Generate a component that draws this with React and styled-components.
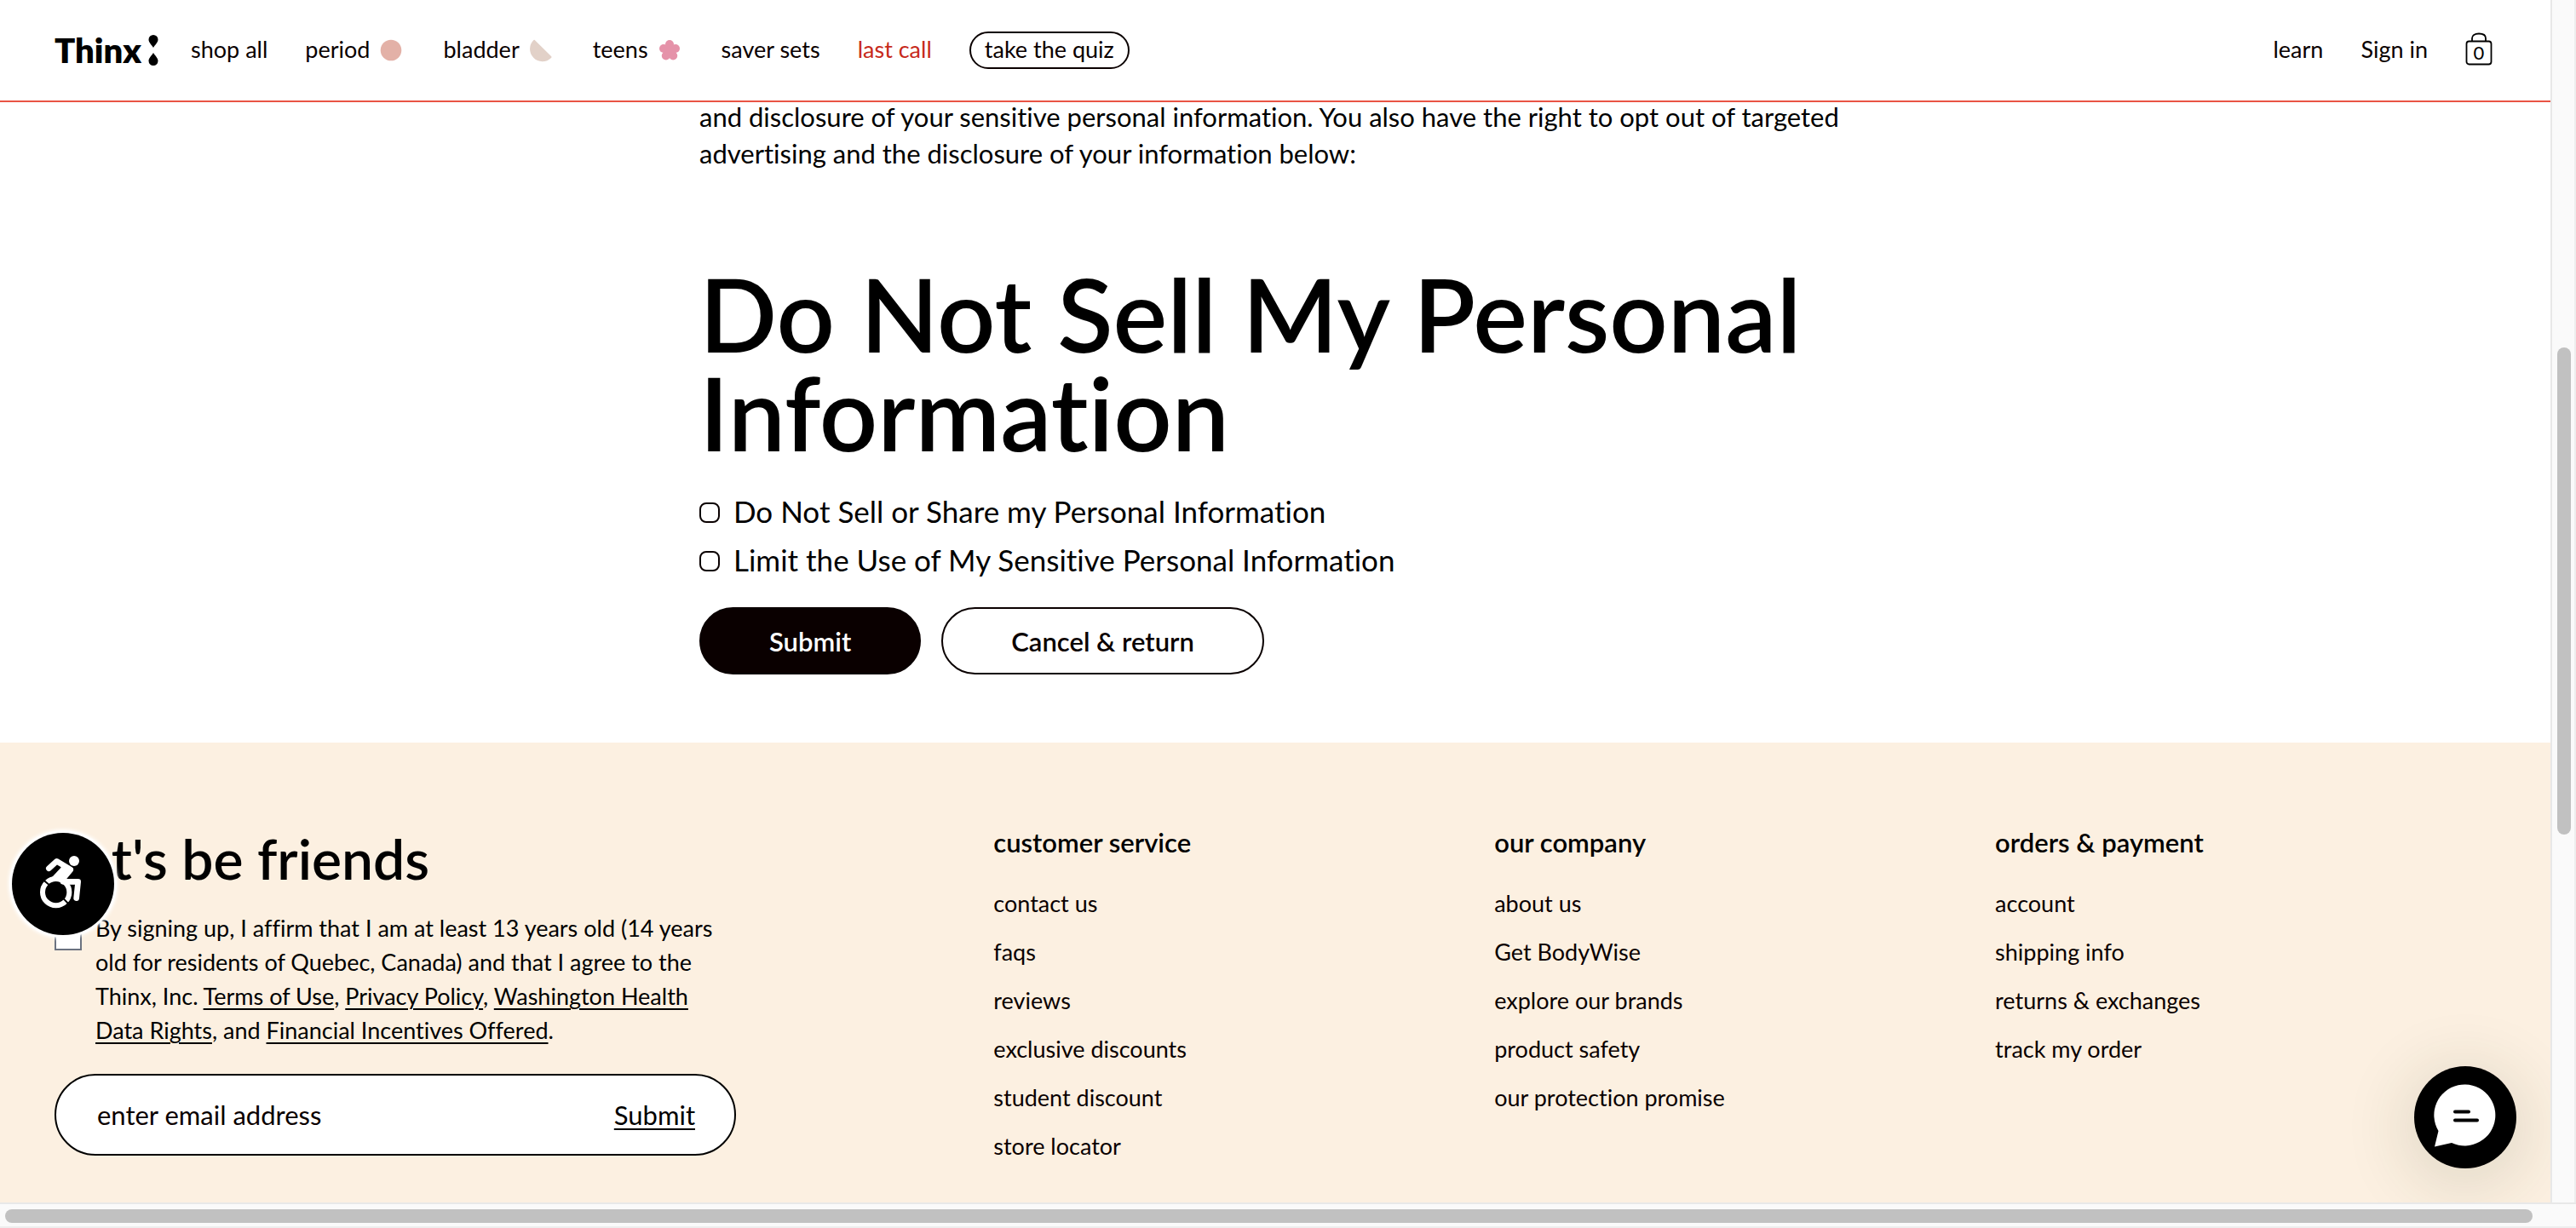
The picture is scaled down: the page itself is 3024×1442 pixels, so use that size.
import React from "react";
import styled, { createGlobalStyle } from "styled-components";

const GlobalStyle = createGlobalStyle`
  *, *::before, *::after { box-sizing: border-box; }
  html, body, #root { height: 100%; }
  body {
    margin: 0;
    background: #fff;
    color: #000;
    font-family: Lato, "Open Sans", sans-serif;
    font-size: 27px;
    font-variant-ligatures: none;
  }
  h1, h2, h3, p, ul { margin: 0; padding: 0; }
  ul { list-style: none; }
  button, input { font: inherit; color: inherit; }
  button { cursor: pointer; }
`;

const Frame = styled.div`
  display: grid;
  grid-template-columns: minmax(0, 1fr) 30px;
  grid-template-rows: minmax(0, 1fr) 30px;
  height: 100vh;
  overflow: hidden;
`;

const Viewport = styled.div`
  position: relative;
  display: flex;
  flex-direction: column;
  overflow: hidden;
`;

const VerticalTrack = styled.div`
  display: grid;
  grid-template-rows: 408fr 572fr 432fr;
  padding: 0 4px 0 6px;
  background: #fafafa;
  border-left: 2px solid #e8e8e8;
  border-right: 2px solid #ededed;
`;

const HorizontalTrack = styled.div`
  grid-column: 1 / -1;
  padding: 6px 51px 4px 6px;
  background: #fafafa;
  border-top: 2px solid #e8e8e8;
  border-bottom: 2px solid #ededed;
`;

const Thumb = styled.div`
  grid-row: 2;
  height: 100%;
  border-radius: 8px;
  background: #c1c1c1;
`;

const Header = styled.header`
  position: absolute;
  inset: 0 0 auto 0;
  z-index: 2;
  display: flex;
  align-items: center;
  justify-content: space-between;
  height: 120px;
  padding: 0 68px 0 64px;
  background: #fff;
  border-bottom: 2px solid #e95444;
`;

const Nav = styled.nav`
  display: flex;
  align-items: center;
  gap: 44px;
`;

const Logo = styled.a`
  display: flex;
  align-items: center;
  gap: 8px;
  margin-right: -6px;
  font-size: 40px;
  line-height: 44px;
  font-weight: 800;
  color: #000;
  text-decoration: none;
`;

const NavLink = styled.a`
  display: flex;
  align-items: center;
  gap: 10px;
  padding-bottom: 2px;
  line-height: 32px;
  color: ${(p) => (p.$accent ? "#c72a1c" : "#0a0000")};
  text-decoration: none;
  white-space: nowrap;
`;

const QuizLink = styled(NavLink)`
  height: 44px;
  padding: 0 16px 2px;
  border: 2px solid #0a0000;
  border-radius: 22px;
`;

const Main = styled.main`
  flex: none;
  width: 100%;
  max-width: 1352px;
  margin: 0 auto;
  padding: 116px 0 80px;
`;

const Intro = styled.p`
  font-size: 31px;
  line-height: 43px;
`;

const Title = styled.h1`
  margin: 108px 0 30px;
  font-size: 120px;
  line-height: 116px;
  font-weight: 600;
`;

const Option = styled.label`
  display: flex;
  align-items: center;
  gap: 16px;
  font-size: 35px;
  line-height: 57px;
`;

const OptionBox = styled.input`
  appearance: none;
  flex: none;
  width: 24px;
  height: 24px;
  margin: 2px 0 0;
  border: 2px solid #0a0000;
  border-radius: 8px;
  background: #fff;
  &:checked { background: #0a0000; }
`;

const Actions = styled.div`
  display: flex;
  gap: 24px;
  margin-top: 27px;
`;

const PillButton = styled.button`
  height: 79px;
  padding: 0 80px;
  border: 2px solid #0a0000;
  border-radius: 40px;
  background: ${(p) => (p.$filled ? "#0a0000" : "#fff")};
  color: ${(p) => (p.$filled ? "#fff" : "#0a0000")};
  font-size: 31px;
  font-weight: 600;
`;

const Footer = styled.footer`
  flex: 1 0 auto;
  display: grid;
  grid-template-columns: 15fr 8fr 8fr 8fr;
  padding: 98px 64px 55px;
  background: #fcf0e1;
`;

const Signup = styled.form`
  width: 100%;
  max-width: 800px;
`;

const SignupTitle = styled.h2`
  font-size: 66px;
  line-height: 76px;
  font-weight: 600;
`;

const Consent = styled.div`
  display: flex;
  align-items: flex-start;
  gap: 16px;
  margin: 24px 0 31px;
  line-height: 40px;
  a { color: inherit; text-decoration-thickness: 2px; text-underline-offset: 4px; }
`;

const ConsentBox = styled.input`
  appearance: none;
  flex: none;
  width: 32px;
  height: 32px;
  margin: 14px 0 0;
  border: 2px solid #6b7280;
  background: #fff;
  &:checked { background: #6b7280; }
`;

const EmailField = styled.div`
  display: flex;
  align-items: center;
  height: 96px;
  padding: 0 46px 0 48px;
  border: 2px solid #000;
  border-radius: 48px;
  background: #fff;
  font-size: 31px;
`;

const EmailInput = styled.input`
  flex: 1;
  min-width: 0;
  padding: 0;
  border: 0;
  outline: 0;
  background: transparent;
  &::placeholder { color: #0a0000; opacity: 1; }
`;

const TextButton = styled.button`
  padding: 0;
  border: 0;
  background: none;
  text-decoration: underline;
  text-decoration-thickness: 2px;
  text-underline-offset: 4px;
`;

const ColumnTitle = styled.h3`
  margin-bottom: 24px;
  font-size: 31px;
  line-height: 38px;
  font-weight: 600;
`;

const ColumnLink = styled.a`
  display: block;
  line-height: 57px;
  color: #0a0000;
  text-decoration: none;
`;

const RoundButton = styled.button`
  position: absolute;
  z-index: 3;
  width: 120px;
  height: 120px;
  padding: 0;
  border: 0;
  border-radius: 50%;
  background: #000;
  svg { display: block; }
`;

const AccessButton = styled(RoundButton)`
  left: 14px;
  bottom: 314px;
  box-shadow: 0 0 0 3px #fff, 0 0 4px 4px #fff;
`;

const ChatButton = styled(RoundButton)`
  right: 40px;
  bottom: 40px;
  box-shadow: 0 12px 80px 8px rgba(40, 60, 20, 0.14);
`;

const Drops = () => (
  <svg width="12" height="36" viewBox="0 0 12 36" aria-hidden="true">
    <path d="M6 15C4 11.500 0.500 9 0.500 5.500A5.500 5.500 0 0 1 11.500 5.500C11.500 9 8 11.500 6 15Z" />
    <path d="M6 21C4 24.500 0.500 27 0.500 30.500A5.500 5.500 0 0 0 11.500 30.500C11.500 27 8 24.500 6 21Z" />
  </svg>
);

const Circle = () => (
  <svg width="32" height="32" viewBox="0 0 32 32" aria-hidden="true">
    <circle cx="15" cy="17" r="12.300" fill="#e3b1a7" />
  </svg>
);

const HalfMoon = () => (
  <svg width="32" height="32" viewBox="0 0 32 32" aria-hidden="true">
    <path d="M6.500 5Q7.500 4.500 8.200 5.500L27 24Q28 25 27 26A14 14 0 0 1 6.500 5Z" fill="#e2d1c8" />
  </svg>
);

const Flower = () => (
  <svg width="32" height="32" viewBox="0 0 32 32" aria-hidden="true">
    <g fill="#e592a9">
      <circle cx="15" cy="10" r="5" />
      <circle cx="8" cy="15" r="5" />
      <circle cx="22" cy="15" r="5" />
      <circle cx="10.800" cy="23.500" r="5" />
      <circle cx="19.200" cy="23.500" r="5" />
      <circle cx="15" cy="17" r="7" />
    </g>
  </svg>
);

const Bag = () => (
  <svg width="32" height="40" viewBox="0 0 32 40" role="img" aria-label="Bag, 0 items">
    <g fill="none" stroke="#000" strokeWidth="1.800">
      <rect x="1.500" y="10.500" width="29" height="27" rx="3" />
      <path d="M8 10.500V7C8 3.500 11 1.500 16 1.500S24 3.500 24 7V10.500" />
    </g>
    <text x="16" y="32" fontSize="22" textAnchor="middle">0</text>
  </svg>
);

const Wheelchair = () => (
  <svg width="120" height="120" viewBox="42 51 360 360" aria-hidden="true">
    <circle cx="261" cy="150" r="18" fill="#fff" />
    <g fill="none" stroke="#fff" strokeLinecap="round" strokeLinejoin="round">
      <path d="M172 176L200 151L248 180" strokeWidth="20" />
      <path d="M222 223H275L269 281" strokeWidth="20" />
    </g>
    <circle cx="197" cy="260" r="47" fill="none" stroke="#fff" strokeWidth="18" />
    <path d="M222 155L256 174Q262 182 254 190L234 214H262V232H240Q216 208 164 221L184 206L214 174Z" fill="#fff" />
    <path d="M155 219L173 234M224 283L243 303" stroke="#000" strokeWidth="6" />
  </svg>
);

const ChatIcon = () => (
  <svg width="120" height="120" viewBox="0 0 120 120" aria-hidden="true">
    <path d="M24 94.500L28.500 76A36 36 0 1 1 44 90Z" fill="#fff" />
    <path d="M48 53.500H64M48 63.500H74" stroke="#000" strokeWidth="4" strokeLinecap="round" />
  </svg>
);

const columns = [
  {
    title: "customer service",
    links: ["contact us", "faqs", "reviews", "exclusive discounts", "student discount", "store locator"],
  },
  {
    title: "our company",
    links: ["about us", "Get BodyWise", "explore our brands", "product safety", "our protection promise"],
  },
  {
    title: "orders & payment",
    links: ["account", "shipping info", "returns & exchanges", "track my order"],
  },
];

export default function App() {
  return (
    <>
      <GlobalStyle />
      <Frame>
        <Viewport>
          <Header>
            <Nav aria-label="Shop">
              <Logo href="#">Thinx<Drops /></Logo>
              <NavLink href="#">shop all</NavLink>
              <NavLink href="#">period<Circle /></NavLink>
              <NavLink href="#">bladder<HalfMoon /></NavLink>
              <NavLink href="#">teens<Flower /></NavLink>
              <NavLink href="#">saver sets</NavLink>
              <NavLink href="#" $accent>last call</NavLink>
              <QuizLink href="#">take the quiz</QuizLink>
            </Nav>
            <Nav aria-label="Account">
              <NavLink href="#">learn</NavLink>
              <NavLink href="#">Sign in</NavLink>
              <NavLink href="#"><Bag /></NavLink>
            </Nav>
          </Header>

          <Main>
            <Intro>
              and disclosure of your sensitive personal information. You also have the right to opt out of
              targeted advertising and the disclosure of your information below:
            </Intro>
            <Title>Do Not Sell My Personal Information</Title>
            <Option>
              <OptionBox type="checkbox" />
              Do Not Sell or Share my Personal Information
            </Option>
            <Option>
              <OptionBox type="checkbox" />
              Limit the Use of My Sensitive Personal Information
            </Option>
            <Actions>
              <PillButton type="button" $filled>Submit</PillButton>
              <PillButton type="button">Cancel &amp; return</PillButton>
            </Actions>
          </Main>

          <Footer>
            <Signup onSubmit={(e) => e.preventDefault()}>
              <SignupTitle>Let's be friends</SignupTitle>
              <Consent>
                <ConsentBox type="checkbox" id="consent" />
                <label htmlFor="consent">
                  By signing up, I affirm that I am at least 13 years old (14 years old for residents of
                  Quebec, Canada) and that I agree to the Thinx, Inc. <a href="#">Terms of Use</a>,{" "}
                  <a href="#">Privacy Policy</a>, <a href="#">Washington Health Data Rights</a>, and{" "}
                  <a href="#">Financial Incentives Offered</a>.
                </label>
              </Consent>
              <EmailField>
                <EmailInput type="email" placeholder="enter email address" aria-label="Email address" />
                <TextButton type="submit">Submit</TextButton>
              </EmailField>
            </Signup>
            {columns.map((column) => (
              <div key={column.title}>
                <ColumnTitle>{column.title}</ColumnTitle>
                <ul>
                  {column.links.map((link) => (
                    <li key={link}><ColumnLink href="#">{link}</ColumnLink></li>
                  ))}
                </ul>
              </div>
            ))}
          </Footer>

          <AccessButton type="button" aria-label="Accessibility options"><Wheelchair /></AccessButton>
          <ChatButton type="button" aria-label="Open chat"><ChatIcon /></ChatButton>
        </Viewport>
        <VerticalTrack><Thumb /></VerticalTrack>
        <HorizontalTrack><Thumb /></HorizontalTrack>
      </Frame>
    </>
  );
}
